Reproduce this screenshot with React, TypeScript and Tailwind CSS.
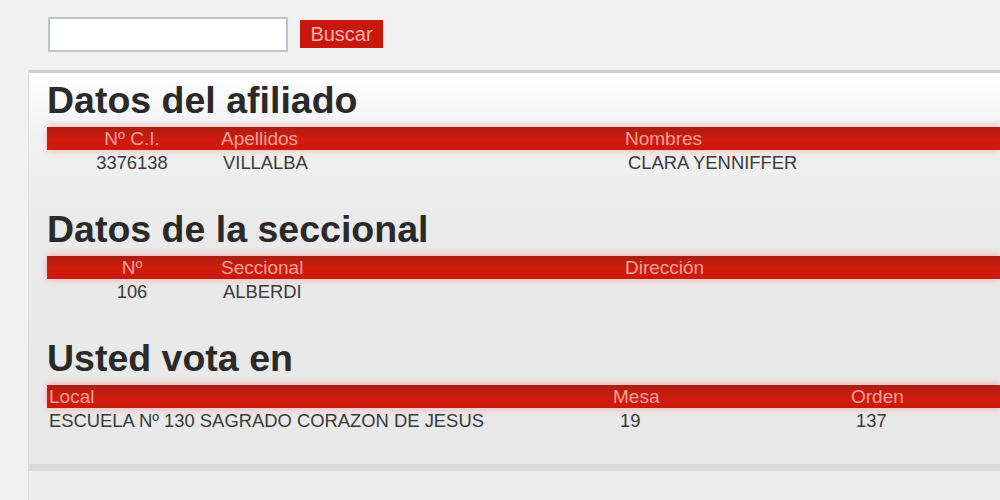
const font = { fontFamily: '"Liberation Sans", Arial, sans-serif' };

type Col = { label: string; value: string };

const sections: { title: string; grid: string; head: string[]; data: string[]; cols: Col[] }[] = [
  {
    title: "Datos del afiliado",
    grid: "grid-cols-[170px_404px_1fr]",
    head: ["text-center", "pl-[4px]", "pl-[4px]"],
    data: ["text-center", "pl-[6px]", "pl-[7px]"],
    cols: [
      { label: "Nº C.I.", value: "3376138" },
      { label: "Apellidos", value: "VILLALBA" },
      { label: "Nombres", value: "CLARA YENNIFFER" },
    ],
  },
  {
    title: "Datos de la seccional",
    grid: "grid-cols-[170px_404px_1fr]",
    head: ["text-center", "pl-[4px]", "pl-[4px]"],
    data: ["text-center", "pl-[6px]", "pl-[7px]"],
    cols: [
      { label: "Nº", value: "106" },
      { label: "Seccional", value: "ALBERDI" },
      { label: "Dirección", value: "" },
    ],
  },
  {
    title: "Usted vota en",
    grid: "grid-cols-[564px_236px_1fr]",
    head: ["pl-[2px]", "pl-[2px]", "pl-[4px]"],
    data: ["pl-[2px]", "pl-[9px]", "pl-[9px]"],
    cols: [
      { label: "Local", value: "ESCUELA Nº 130 SAGRADO CORAZON DE JESUS" },
      { label: "Mesa", value: "19" },
      { label: "Orden", value: "137" },
    ],
  },
];

export default function App() {
  return (
    <div className="w-[1000px] h-[500px] overflow-hidden bg-[#f1f1f1] flex flex-col" style={font}>
      {/* search bar */}
      <div className="h-[70px] shrink-0 pl-[48px] pt-[17px] flex items-start">
        <input
          className="w-[240px] h-[35px] bg-white border-2 border-[#bcc4cc] outline-none"
          defaultValue=""
        />
        <button className="ml-[12px] mt-[3px] w-[83px] h-[28px] bg-[#c8180e] text-[#f7b3aa] text-[20px] leading-[28px]">
          Buscar
        </button>
      </div>

      <div className="ml-[28px] border-l border-[#dcdcdc]">
        <div className="border-t-[3px] border-b-[7px] border-t-[#cfcfcf] border-b-[#d9d9d9] bg-[linear-gradient(to_bottom,#ffffff_0px,#f2f2f2_60px,#eaeaea_150px,#e8e8e8_100%)] pl-[18px] pt-[9px] pb-[32px]">
          {sections.map((s, i) => (
            <div key={s.title} className={i > 0 ? "mt-[37px]" : ""}>
              <h2 className="text-[37.5px] leading-[37px] font-bold text-[#2a2a2a]">{s.title}</h2>
              <div
                className={`mt-[8px] h-[23px] grid ${s.grid} bg-[linear-gradient(to_bottom,#a91e10,#d21b0e_55%,#cc190d)] shadow-[0_-3px_6px_rgba(255,150,150,0.45),0_3px_6px_rgba(255,150,150,0.35)] text-[19px] leading-[23px] text-[#f3a29a]`}
              >
                {s.cols.map((c, j) => (
                  <div key={c.label} className={`${s.head[j]} whitespace-nowrap`}>
                    {c.label}
                  </div>
                ))}
              </div>
              <div className={`mt-[2px] h-[22px] grid ${s.grid} text-[18.4px] leading-[22px] text-[#3a3a3a]`}>
                {s.cols.map((c, j) => (
                  <div key={c.label} className={`${s.data[j]} whitespace-nowrap`}>
                    {c.value}
                  </div>
                ))}
              </div>
            </div>
          ))}
        </div>
        <div className="h-[40px] bg-[#eeeeee]" />
      </div>
    </div>
  );
}
